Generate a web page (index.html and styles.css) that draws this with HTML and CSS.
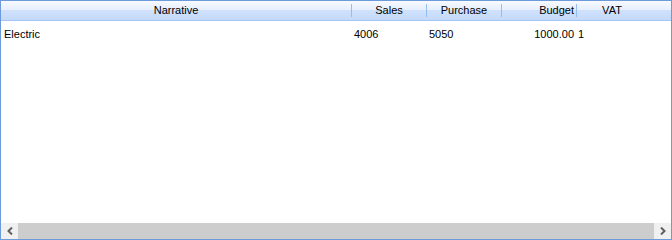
FILE: index.html
```html
<!DOCTYPE html>
<html lang="en">
<head>
    <meta charset="UTF-8">
    <title>Narrative Grid</title>
    <link rel="stylesheet" href="styles.css">
</head>
<body>
    <div class="grid">
        <div class="grid-header">
            <div class="hcell col-narrative">Narrative</div>
            <div class="divider"></div>
            <div class="hcell col-num">Sales</div>
            <div class="divider"></div>
            <div class="hcell col-num">Purchase</div>
            <div class="divider"></div>
            <div class="hcell col-num right">Budget</div>
            <div class="divider"></div>
            <div class="hcell col-vat">VAT</div>
        </div>
        <div class="grid-body">
            <div class="row">
                <div class="cell col-narrative">Electric</div>
                <div class="cell col-num">4006</div>
                <div class="cell col-num">5050</div>
                <div class="cell col-num right">1000.00</div>
                <div class="cell col-vat">1</div>
            </div>
        </div>
        <div class="hscroll">
            <div class="scroll-btn">
                <svg width="8" height="8" viewBox="0 0 8 8"><polyline points="6,0.5 2.5,4 6,7.5" fill="none" stroke="#5f5f5f" stroke-width="2"/></svg>
            </div>
            <div class="scroll-track"></div>
            <div class="scroll-btn">
                <svg width="8" height="8" viewBox="0 0 8 8"><polyline points="2,0.5 5.5,4 2,7.5" fill="none" stroke="#5f5f5f" stroke-width="2"/></svg>
            </div>
        </div>
    </div>
</body>
</html>
```
FILE: styles.css
```css
body {
    margin: 0;
    font-family: "Liberation Sans", Arial, sans-serif;
    font-size: 11px;
    color: #000;
    background: #fff;
}
.grid {
    width: 672px;
    height: 240px;
    box-sizing: border-box;
    border: 1px solid #6d9ad8;
    display: flex;
    flex-direction: column;
}
.grid-header {
    display: flex;
    height: 19px;
    border-bottom: 1px solid #a5c7f4;
    background: linear-gradient(to bottom, #f7faff 0%, #e6effe 45%, #cfe1fc 50%, #c4d9fa 100%);
}
.hcell {
    line-height: 19px;
    text-align: center;
    white-space: nowrap;
}
.divider {
    width: 1px;
    margin: 3px 0;
    background: #96bdef;
}
.col-narrative { width: 350px; }
.col-num { width: 74px; }
.col-vat { width: 70px; }
.right { text-align: right; padding-right: 2px; box-sizing: border-box; }

.grid-body {
    flex: 1;
    background: #fff;
}
.row {
    display: flex;
    height: 17px;
    line-height: 17px;
    margin-top: 5px;
}
.cell {
    white-space: nowrap;
    box-sizing: border-box;
    padding-left: 2px;
}
.row .col-narrative { width: 351px; padding-left: 3px; }
.row .col-num { width: 75px; }
.row .col-num.right { padding-left: 0; padding-right: 3px; }
.row .col-vat { padding-left: 1px; }

.hscroll {
    display: flex;
    height: 16px;
    background: #cdcdcd;
}
.scroll-btn {
    width: 17px;
    background: #f0f0f0;
    display: flex;
    align-items: center;
    justify-content: center;
}
.scroll-track {
    flex: 1;
}
```
